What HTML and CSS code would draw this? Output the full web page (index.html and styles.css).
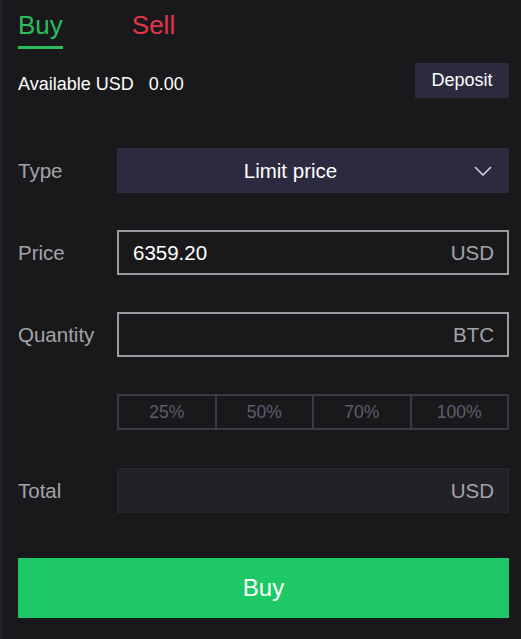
FILE: index.html
```html
<!DOCTYPE html>
<html lang="en">
<head>
    <meta charset="UTF-8">
    <meta name="viewport" content="width=device-width, initial-scale=1.0">
    <title>Trade</title>
    <link rel="stylesheet" href="styles.css">
</head>
<body>
    <div class="panel">
        <div class="tabs">
            <div class="tab tab-buy active">Buy</div>
            <div class="tab tab-sell">Sell</div>
        </div>

        <div class="balance-row">
            <div class="balance">Available USD <span class="balance-value">0.00</span></div>
            <button class="deposit-btn" type="button">Deposit</button>
        </div>

        <form class="order-form">
            <div class="form-row">
                <label class="form-label">Type</label>
                <div class="select-box">
                    <span class="select-text">Limit price</span>
                    <span class="select-arrow">
                        <svg width="18" height="10" viewBox="0 0 18 10">
                            <path d="M1 1 L9 9 L17 1" fill="none" stroke="#d8d8de" stroke-width="1.5"/>
                        </svg>
                    </span>
                </div>
            </div>

            <div class="form-row">
                <label class="form-label">Price</label>
                <div class="input-box">
                    <span class="input-value">6359.20</span>
                    <span class="input-unit">USD</span>
                </div>
            </div>

            <div class="form-row">
                <label class="form-label">Quantity</label>
                <div class="input-box">
                    <span class="input-value"></span>
                    <span class="input-unit">BTC</span>
                </div>
            </div>

            <div class="form-row pct-row">
                <span class="form-label"></span>
                <div class="pct-group">
                    <button type="button" class="pct-btn">25%</button>
                    <button type="button" class="pct-btn">50%</button>
                    <button type="button" class="pct-btn">70%</button>
                    <button type="button" class="pct-btn">100%</button>
                </div>
            </div>

            <div class="form-row total-row">
                <label class="form-label">Total</label>
                <div class="input-box total-box">
                    <span class="input-value"></span>
                    <span class="input-unit">USD</span>
                </div>
            </div>

            <button type="button" class="submit-btn">Buy</button>
        </form>
    </div>
</body>
</html>
```

FILE: styles.css
```css
body {
    margin: 0;
    padding: 0;
    background-color: #19191c;
    font-family: "Liberation Sans", Arial, sans-serif;
    color: #fff;
}

.panel {
    min-height: 639px;
    box-sizing: border-box;
    border-left: 3px solid #222226;
    padding: 0 12px 0 15px;
}

/* Buy / Sell tabs */
.tabs {
    display: flex;
    gap: 69px;
}

.tab {
    font-size: 26px;
    line-height: 30px;
    padding: 10px 0 6px;
    border-bottom: 3px solid transparent;
}

.tab-buy {
    color: #2dbd5f;
}

.tab-buy.active {
    border-bottom-color: #2dbd5f;
}

.tab-sell {
    color: #e3344c;
}

/* Balance line */
.balance-row {
    display: flex;
    justify-content: space-between;
    align-items: center;
    margin-top: 14px;
}

.balance {
    font-size: 18px;
    margin-top: 7px;
}

.balance-value {
    margin-left: 10px;
}

.deposit-btn {
    width: 94px;
    height: 35px;
    border: none;
    background-color: #2c2a3d;
    color: #fff;
    font-family: inherit;
    font-size: 18px;
    padding: 0;
}

/* Form */
.order-form {
    display: flex;
    flex-direction: column;
    gap: 37px;
    margin-top: 50px;
}

.form-row {
    display: flex;
    align-items: center;
}

.form-label {
    width: 99px;
    flex-shrink: 0;
    font-size: 20.5px;
    color: #a3a3a8;
}

.select-box {
    flex: 1;
    height: 45px;
    display: flex;
    align-items: center;
    background-color: #2c2a3e;
    font-size: 20.5px;
}

.select-text {
    flex: 1;
    text-align: center;
    margin-right: 10px;
}

.select-arrow {
    width: 35px;
    display: flex;
    align-items: center;
}

.input-box {
    flex: 1;
    height: 45px;
    box-sizing: border-box;
    display: flex;
    align-items: center;
    justify-content: space-between;
    border: 2px solid #9c9ca0;
    padding: 0 13px 0 14px;
    font-size: 20.5px;
}

.input-value {
    color: #fff;
}

.input-unit {
    color: #a3a3a8;
}

.total-row {
    margin-top: 1px;
}

.total-box {
    border: 1px solid #27272c;
    background-color: #212126;
    padding: 0 14px 0 15px;
}

.pct-group {
    flex: 1;
    display: grid;
    grid-template-columns: repeat(4, 1fr);
    height: 36px;
    box-sizing: border-box;
    border: 2px solid #393848;
    border-right: none;
}

.pct-btn {
    border: none;
    border-right: 2px solid #393848;
    background: transparent;
    color: #5e5d6d;
    font-family: inherit;
    font-size: 17.5px;
    padding: 0;
}

.submit-btn {
    margin-top: 8px;
    height: 60px;
    border: none;
    background-color: #1dc966;
    color: #fff;
    font-family: inherit;
    font-size: 24px;
}
```
